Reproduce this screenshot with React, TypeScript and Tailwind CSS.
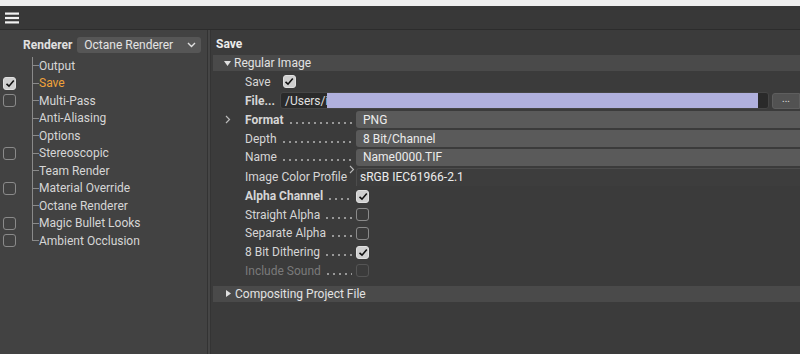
import React from "react";

const font = { fontFamily: "Roboto, 'Liberation Sans', sans-serif" };

function Check({ checked, dim }: { checked?: boolean; dim?: boolean }) {
  if (checked) {
    return (
      <div className="w-[13px] h-[13px] rounded-[3px] bg-[#cfcfcf] border border-[#e0e0e0] flex items-center justify-center">
        <svg width="10" height="9" viewBox="0 0 10 9">
          <path d="M1.5 4.8 L4 7.2 L8.8 1.5" fill="none" stroke="#111" strokeWidth="1.6" />
        </svg>
      </div>
    );
  }
  return (
    <div
      className={
        "w-[13px] h-[13px] rounded-[3px] border " +
        (dim ? "border-[#555]" : "border-[#8a8a8a]")
      }
    />
  );
}

const tree: { name: string; box?: "on" | "off"; active?: boolean }[] = [
  { name: "Output" },
  { name: "Save", box: "on", active: true },
  { name: "Multi-Pass", box: "off" },
  { name: "Anti-Aliasing" },
  { name: "Options" },
  { name: "Stereoscopic", box: "off" },
  { name: "Team Render" },
  { name: "Material Override", box: "off" },
  { name: "Octane Renderer" },
  { name: "Magic Bullet Looks", box: "off" },
  { name: "Ambient Occlusion", box: "off" },
];

function Dots() {
  return (
    <div className="flex-1 h-[2px] mt-[6px] ml-[4px] mr-[4px] bg-[radial-gradient(circle,#9a9a9a_0.7px,transparent_1.1px)] bg-[length:6px_2px] bg-repeat-x" />
  );
}

function Label({
  text,
  bold,
  dim,
  dots = true,
}: {
  text: string;
  bold?: boolean;
  dim?: boolean;
  dots?: boolean;
}) {
  return (
    <div className="w-[111px] flex items-center pl-[32px] box-content">
      <span
        className={
          "whitespace-nowrap " +
          (bold ? "font-bold " : "") +
          (dim ? "text-[#7a7a7a]" : "text-[#d6d6d6]")
        }
      >
        {text}
      </span>
      {dots && <Dots />}
    </div>
  );
}

export default function App() {
  return (
    <div
      className="w-[800px] h-[354px] flex flex-col bg-[#3c3c3c] text-[12px] text-[#d6d6d6] overflow-hidden"
      style={font}
    >
      <div className="h-[6px] bg-[#efefef]" />
      <div className="h-[24px] bg-[#383838] border-b border-[#2c2c2c] flex items-center pl-[5px]">
        <svg width="14" height="12" viewBox="0 0 14 12">
          <rect x="0" y="0.5" width="14" height="2.2" fill="#f2f2f2" />
          <rect x="0" y="4.9" width="14" height="2.2" fill="#f2f2f2" />
          <rect x="0" y="9.3" width="14" height="2.2" fill="#f2f2f2" />
        </svg>
      </div>
      <div className="flex-1 flex">
        {/* left panel */}
        <div className="w-[208px] bg-[#424242] border-r border-[#333] flex flex-col">
          <div className="h-[26px] flex items-center pl-[23px] pt-[3px] gap-[5px]">
            <span className="font-bold text-[#e0e0e0]">Renderer</span>
            <div className="w-[124px] h-[16px] rounded-[3px] bg-[#565656] flex items-center justify-between pl-[7px] pr-[5px] text-[#e4e4e4]">
              <span>Octane Renderer</span>
              <svg width="9" height="6" viewBox="0 0 9 6">
                <path d="M1 1 L4.5 4.5 L8 1" fill="none" stroke="#e0e0e0" strokeWidth="1.4" />
              </svg>
            </div>
          </div>
          <div className="relative mt-[1px] flex flex-col">
            <div className="absolute left-[32px] top-[0px] h-[184px] w-px bg-[#8a8a8a]" />
            {tree.map((t, i) => (
              <div key={i} className="h-[17.5px] flex items-center">
                <div className="w-[32px] pl-[3px] flex items-center">
                  {t.box === "on" && <Check checked />}
                  {t.box === "off" && <Check />}
                </div>
                <div className="w-[7px] h-px bg-[#8a8a8a]" />
                <span className={t.active ? "text-[#f0a23a]" : "text-[#d6d6d6]"}>
                  {t.name}
                </span>
              </div>
            ))}
          </div>
        </div>
        <div className="w-[3px] bg-[#464646] border-r border-[#343434]" />
        {/* right panel */}
        <div className="flex-1 bg-[#3b3b3b] flex flex-col pl-[2px]">
          <div className="h-[25px] flex items-center pl-[3px] pt-[3px] font-bold text-[#ececec]">
            Save
          </div>
          <div className="h-[16px] bg-[#4a4a4a] flex items-center pl-[11px] gap-[3px] text-[#e2e2e2]">
            <svg width="7" height="5" viewBox="0 0 7 5">
              <path d="M0 0 L7 0 L3.5 5 Z" fill="#e0e0e0" />
            </svg>
            <span>Regular Image</span>
          </div>
          <div className="flex flex-col mt-[1px]">
            {/* Save */}
            <div className="h-[19px] flex items-center pl-[32px] gap-[12px]">
              <span>Save</span>
              <Check checked />
            </div>
            {/* File */}
            <div className="h-[19px] flex items-center pl-[32px]">
              <span className="font-bold w-[35px]">File...</span>
              <div className="h-[17px] w-[489px] bg-[#2a2a2a] rounded-[3px] border border-[#454545] flex items-center pl-[4px] relative">
                <span className="text-[#e0e0e0]">/Users/il</span>
                <div className="absolute left-[46px] top-0 h-full w-[431px] bg-[#b0b0dd]" />
              </div>
              <div className="ml-[3px] h-[16px] flex-1 bg-[#525252] rounded-l-[3px] border border-[#5e5e5e] flex items-center justify-center text-[#e0e0e0] text-[10px] leading-none pb-[3px]">
                ...
              </div>
            </div>
            {/* Format */}
            <div className="h-[19px] flex items-center relative">
              <svg className="absolute left-[12px] top-[5px]" width="6" height="9" viewBox="0 0 6 9">
                <path d="M1 1 L4.5 4.5 L1 8" fill="none" stroke="#bbb" strokeWidth="1.2" />
              </svg>
              <Label text="Format" bold />
              <div className="h-[17px] flex-1 bg-[#5a5a5a] rounded-l-[3px] flex items-center pl-[7px] text-[#ececec]">
                PNG
              </div>
            </div>
            <div className="h-[19px] flex items-center">
              <Label text="Depth" />
              <div className="h-[17px] flex-1 bg-[#5a5a5a] rounded-l-[3px] flex items-center pl-[7px] text-[#ececec]">
                8 Bit/Channel
              </div>
            </div>
            <div className="h-[18px] flex items-center">
              <Label text="Name" />
              <div className="h-[17px] flex-1 bg-[#5a5a5a] rounded-l-[3px] flex items-center pl-[7px] text-[#ececec]">
                Name0000.TIF
              </div>
            </div>
            <div className="h-[21px] flex items-center">
              <div className="w-[111px] box-content pl-[32px] flex items-center relative">
                <span className="whitespace-nowrap text-[#d6d6d6]">Image Color Profile</span>
                <svg className="absolute left-[136px] top-[-3px]" width="6" height="9" viewBox="0 0 6 9">
                  <path d="M1 1 L4.5 4.5 L1 8" fill="none" stroke="#bbb" strokeWidth="1.1" />
                </svg>
              </div>
              <div className="h-[18px] flex-1 bg-[#3d3d3d] border-t border-l border-[#4c4c4c] rounded-tl-[3px] flex items-center pl-[3px] text-[#ececec]">
                sRGB IEC61966-2.1
              </div>
            </div>
            {[
              { t: "Alpha Channel", b: true, c: true },
              { t: "Straight Alpha", c: false },
              { t: "Separate Alpha", c: false },
              { t: "8 Bit Dithering", c: true },
              { t: "Include Sound", c: false, d: true },
            ].map((r, i) => (
              <div key={i} className="h-[18.6px] flex items-center">
                <Label text={r.t} bold={r.b} dim={r.d} />
                <Check checked={r.c} dim={r.d} />
              </div>
            ))}
          </div>
          <div className="mt-[6px] h-[16px] bg-[#4a4a4a] flex items-center pl-[13px] gap-[4px] text-[#e2e2e2]">
            <svg width="5" height="7" viewBox="0 0 5 7">
              <path d="M0 0 L5 3.5 L0 7 Z" fill="#e0e0e0" />
            </svg>
            <span>Compositing Project File</span>
          </div>
        </div>
      </div>
    </div>
  );
}
